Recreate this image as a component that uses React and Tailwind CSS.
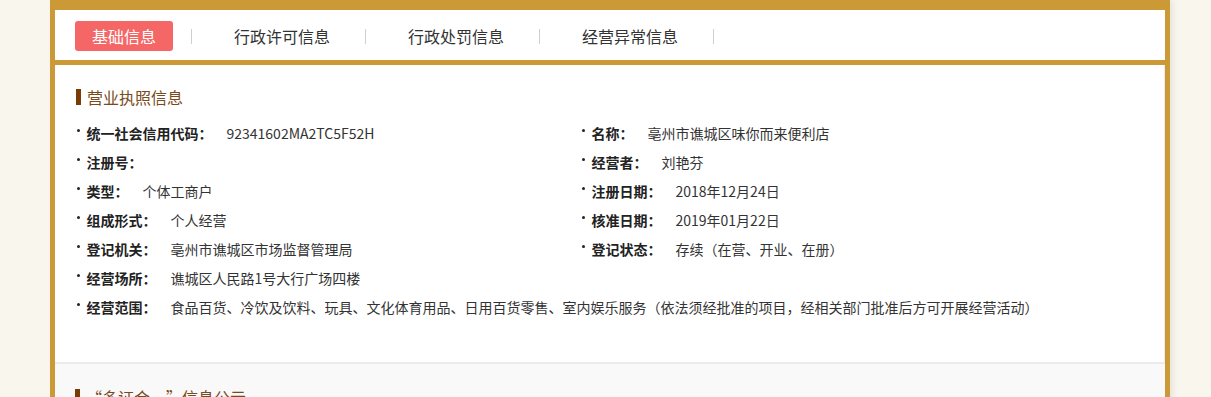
import React from "react";

const font = { fontFamily: '"Noto Sans CJK SC", "Noto Sans", sans-serif' };

function Tab({ label, active }) {
  return (
    <div className="flex items-center">
      <div
        className={
          "h-[30px] px-[17px] flex items-center rounded-[3px] text-[16px] leading-[16px] " +
          (active ? "bg-[#f56767] text-white" : "text-[#333]")
        }
      >
        {label}
      </div>
      <div className="ml-[18px] mr-[25px] w-px h-[15px] bg-[#cfcfcf]" />
    </div>
  );
}

function Item({ label, value, span }) {
  return (
    <div className={"flex items-center h-[29px] " + (span ? "col-span-2" : "")}>
      <div className="w-[2.5px] h-[2.5px] bg-[#222] rounded-full ml-[1px] mr-[7px] -translate-y-[2px]" />
      <span className="font-bold text-[#222] text-[14px] leading-[14px]">{label}</span>
      <span className="ml-[14px] text-[#333] text-[14px] leading-[14px] whitespace-nowrap">{value}</span>
    </div>
  );
}

export default function App() {
  return (
    <div className="w-full h-[397px] bg-[#f9f6ee] overflow-hidden" style={font}>
      <div className="ml-[50px] w-[1120px] border-x-[5px] border-t-[10px] border-[#cb9a37] shadow-[3px_0_6px_rgba(0,0,0,0.08)]">
        <div className="h-[55px] bg-white border-b-[5px] border-[#cb9a37] flex items-start pt-[11px] pl-[20px]">
          <Tab label="基础信息" active />
          <Tab label="行政许可信息" />
          <Tab label="行政处罚信息" />
          <Tab label="经营异常信息" />
        </div>
        <div className="bg-white border-r border-[#ebebeb] pl-[21px] pt-[24px] pb-[41px]">
          <div className="flex items-center h-[16px]">
            <div className="w-[5px] h-[16px] bg-[#7a3c05]" />
            <span className="ml-[6px] text-[16px] leading-[16px] text-[#7a4a1c]">营业执照信息</span>
          </div>
          <div className="mt-[13px] grid grid-cols-[505px_1fr]">
            <Item label="统一社会信用代码：" value="92341602MA2TC5F52H" />
            <Item label="名称：" value="亳州市谯城区味你而来便利店" />
            <Item label="注册号：" value="" />
            <Item label="经营者：" value="刘艳芬" />
            <Item label="类型：" value="个体工商户" />
            <Item label="注册日期：" value="2018年12月24日" />
            <Item label="组成形式：" value="个人经营" />
            <Item label="核准日期：" value="2019年01月22日" />
            <Item label="登记机关：" value="亳州市谯城区市场监督管理局" />
            <Item label="登记状态：" value="存续（在营、开业、在册）" />
            <Item label="经营场所：" value="谯城区人民路1号大行广场四楼" span />
            <Item
              label="经营范围："
              value="食品百货、冷饮及饮料、玩具、文化体育用品、日用百货零售、室内娱乐服务（依法须经批准的项目，经相关部门批准后方可开展经营活动）"
              span
            />
          </div>
        </div>
        <div className="bg-[#f9f9f9] border-t-2 border-[#ebebeb] pl-[20px] pt-[25px] h-[200px]">
          <div className="flex items-center h-[16px]">
            <div className="w-[5px] h-[16px] bg-[#7a3c05]" />
            <span className="ml-[6px] text-[16px] leading-[16px] text-[#7a4a1c]">“多证合一”信息公示</span>
          </div>
        </div>
      </div>
    </div>
  );
}
